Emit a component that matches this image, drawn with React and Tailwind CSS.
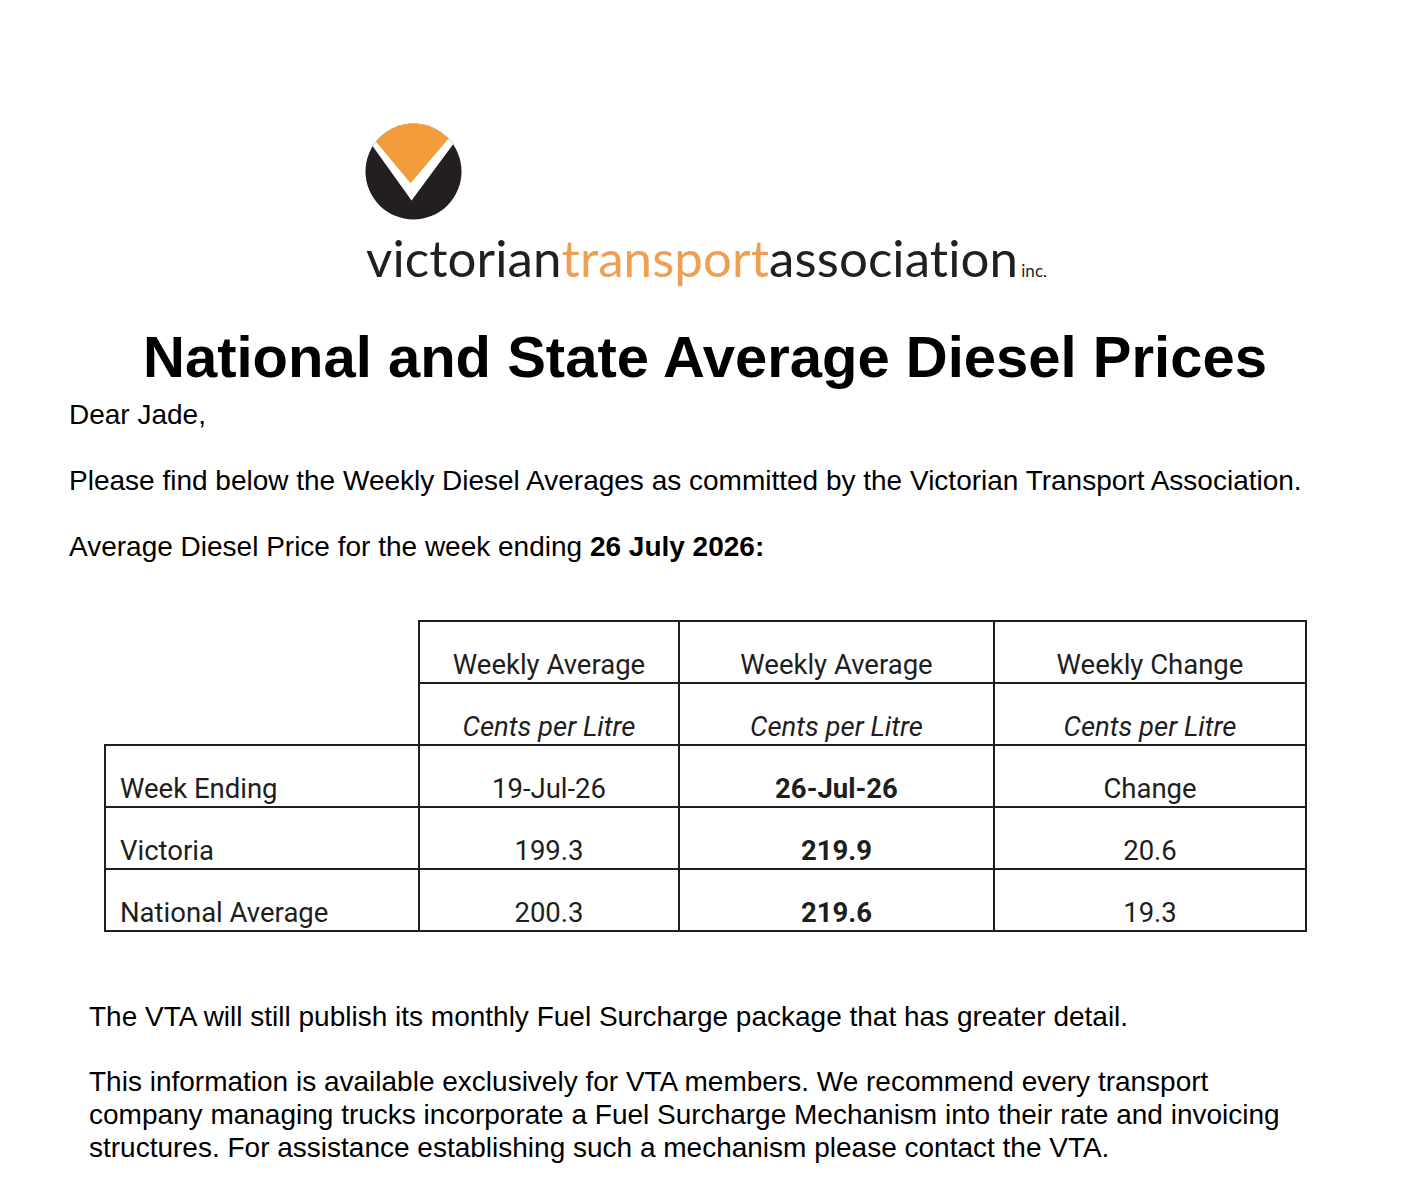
import React from "react";

function LogoMark() {
  return (
    <svg width="97" height="97" viewBox="0 0 100 100" className="block">
      <defs>
        <clipPath id="vtaclip">
          <circle cx="50" cy="50" r="49.5" />
        </clipPath>
      </defs>
      <circle cx="50" cy="50" r="49.5" fill="#231f20" />
      <g clipPath="url(#vtaclip)">
        <polygon points="0,12.8 48,80 100,9.5 100,-10 0,-10" fill="#ffffff" />
        <polygon points="0,5.6 47,62 100,-0.3 100,-10 0,-10" fill="#f29c3c" />
      </g>
    </svg>
  );
}

const cellBase = "border-2 border-[#1e1e1e] h-[62px] align-bottom text-center pb-[2px]";
const leftCell = "border-2 border-[#1e1e1e] h-[62px] align-bottom text-left pl-[14px] pb-[2px]";

export default function App() {
  const table = "font-['Roboto',sans-serif] text-[27.5px] text-[#1e1e1e] leading-[30px]";
  return (
    <div className="w-[1402px] min-h-[1196px] bg-white font-['Liberation_Sans','Arial',sans-serif] text-black">
      <div className="pt-[123px] flex flex-col items-start pl-[365px]">
        <LogoMark />
        <div className="mt-[12px] ml-[1px] flex items-baseline font-['Lato',sans-serif] text-[51px] leading-[52px] tracking-[0.1px]">
          <span className="text-[#231f20]">victorian</span>
          <span className="text-[#eea052]">transport</span>
          <span className="text-[#231f20]">association</span>
          <span className="text-[#231f20] text-[17px] ml-[3px]">inc.</span>
        </div>
      </div>

      <h1 className="mt-[27px] pl-[8px] text-center font-bold text-[58px] leading-[66px]">
        National and State Average Diesel Prices
      </h1>

      <div className="pl-[69px] text-[28px] leading-[32px]">
        <p className="mt-[9px]">Dear Jade,</p>
        <p className="mt-[34px]">
          Please find below the Weekly Diesel Averages as committed by the Victorian Transport Association.
        </p>
        <p className="mt-[34px]">
          Average Diesel Price for the week ending <span className="font-bold">26 July 2026:</span>
        </p>
      </div>

      <div className="pl-[104px] mt-[57px]">
        <table className={"border-collapse table-fixed w-[1201px] " + table}>
          <colgroup>
            <col className="w-[314px]" />
            <col className="w-[260px]" />
            <col className="w-[315px]" />
            <col className="w-[312px]" />
          </colgroup>
          <tbody>
            <tr>
              <td className="h-[62px] p-0"></td>
              <td className={cellBase}>Weekly Average</td>
              <td className={cellBase}>Weekly Average</td>
              <td className={cellBase}>Weekly Change</td>
            </tr>
            <tr>
              <td className="h-[62px] p-0"></td>
              <td className={cellBase + " italic"}>Cents per Litre</td>
              <td className={cellBase + " italic"}>Cents per Litre</td>
              <td className={cellBase + " italic"}>Cents per Litre</td>
            </tr>
            <tr>
              <td className={leftCell}>Week Ending</td>
              <td className={cellBase}>19-Jul-26</td>
              <td className={cellBase + " font-bold"}>26-Jul-26</td>
              <td className={cellBase}>Change</td>
            </tr>
            <tr>
              <td className={leftCell}>Victoria</td>
              <td className={cellBase}>199.3</td>
              <td className={cellBase + " font-bold"}>219.9</td>
              <td className={cellBase}>20.6</td>
            </tr>
            <tr>
              <td className={leftCell}>National Average</td>
              <td className={cellBase}>200.3</td>
              <td className={cellBase + " font-bold"}>219.6</td>
              <td className={cellBase}>19.3</td>
            </tr>
          </tbody>
        </table>
      </div>

      <div className="pl-[89px] text-[28px]">
        <p className="mt-[69px] leading-[32px]">
          The VTA will still publish its monthly Fuel Surcharge package that has greater detail.
        </p>
        <p className="mt-[32px] w-[1205px] leading-[33px] pb-[30px]">
          This information is available exclusively for VTA members. We recommend every transport company managing trucks incorporate a Fuel Surcharge Mechanism into their rate and invoicing structures. For assistance establishing such a mechanism please contact the VTA.
        </p>
      </div>
    </div>
  );
}
